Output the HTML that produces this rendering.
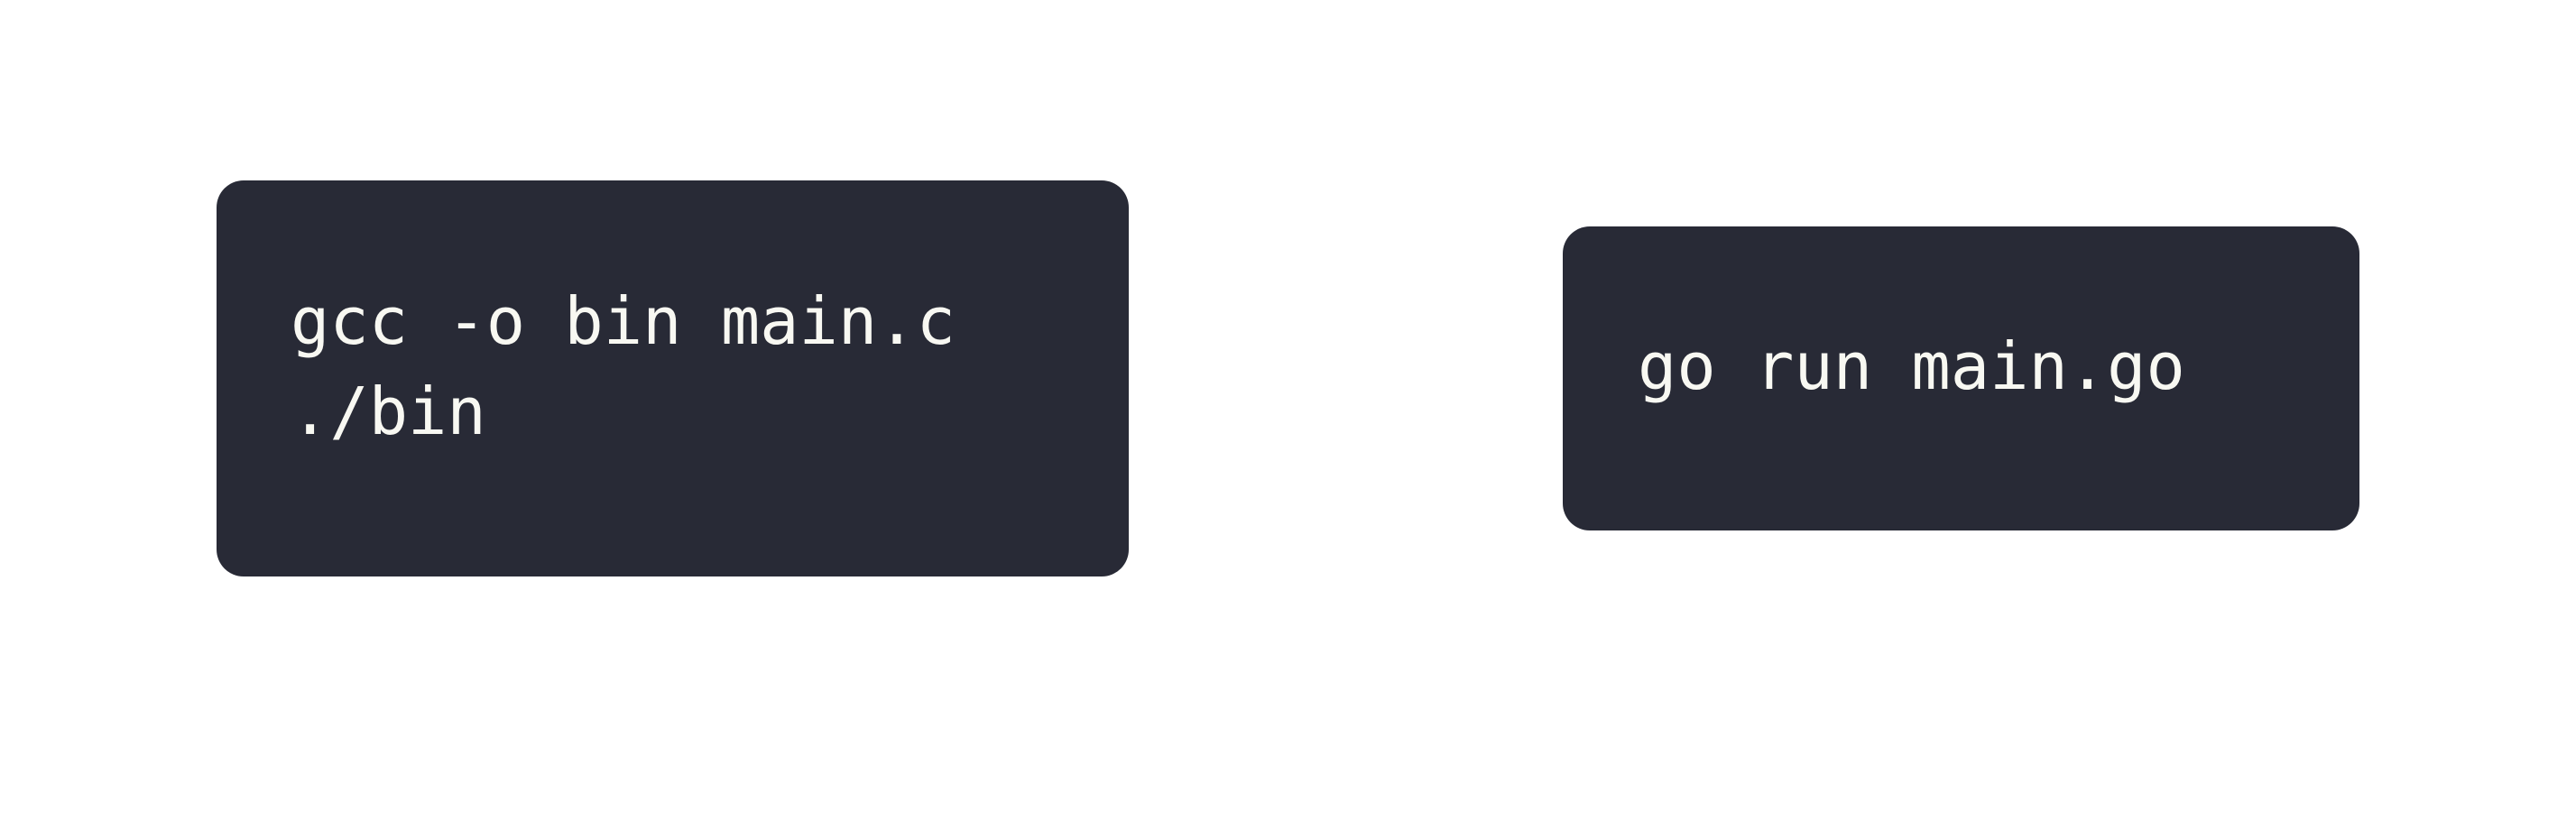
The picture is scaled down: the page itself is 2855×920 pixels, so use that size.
<!DOCTYPE html>
<html><head><style>
html,body{margin:0;padding:0;background:#fff;width:2855px;height:920px;overflow:hidden;position:relative}
.box{position:absolute;background:#282a36;border-radius:30px}
.t{position:absolute;font-family:"DejaVu Sans Mono","Liberation Mono",monospace;font-size:72px;color:#f8f8f2;white-space:pre;line-height:100px}
</style></head><body>
<div class="box" style="left:240px;top:200px;width:1011px;height:439px"></div>
<div class="t" style="left:322px;top:306px">gcc -o bin main.c
./bin</div>
<div class="box" style="left:1732px;top:251px;width:883px;height:337px"></div>
<div class="t" style="left:1815px;top:356px">go run main.go</div>
</body></html>
